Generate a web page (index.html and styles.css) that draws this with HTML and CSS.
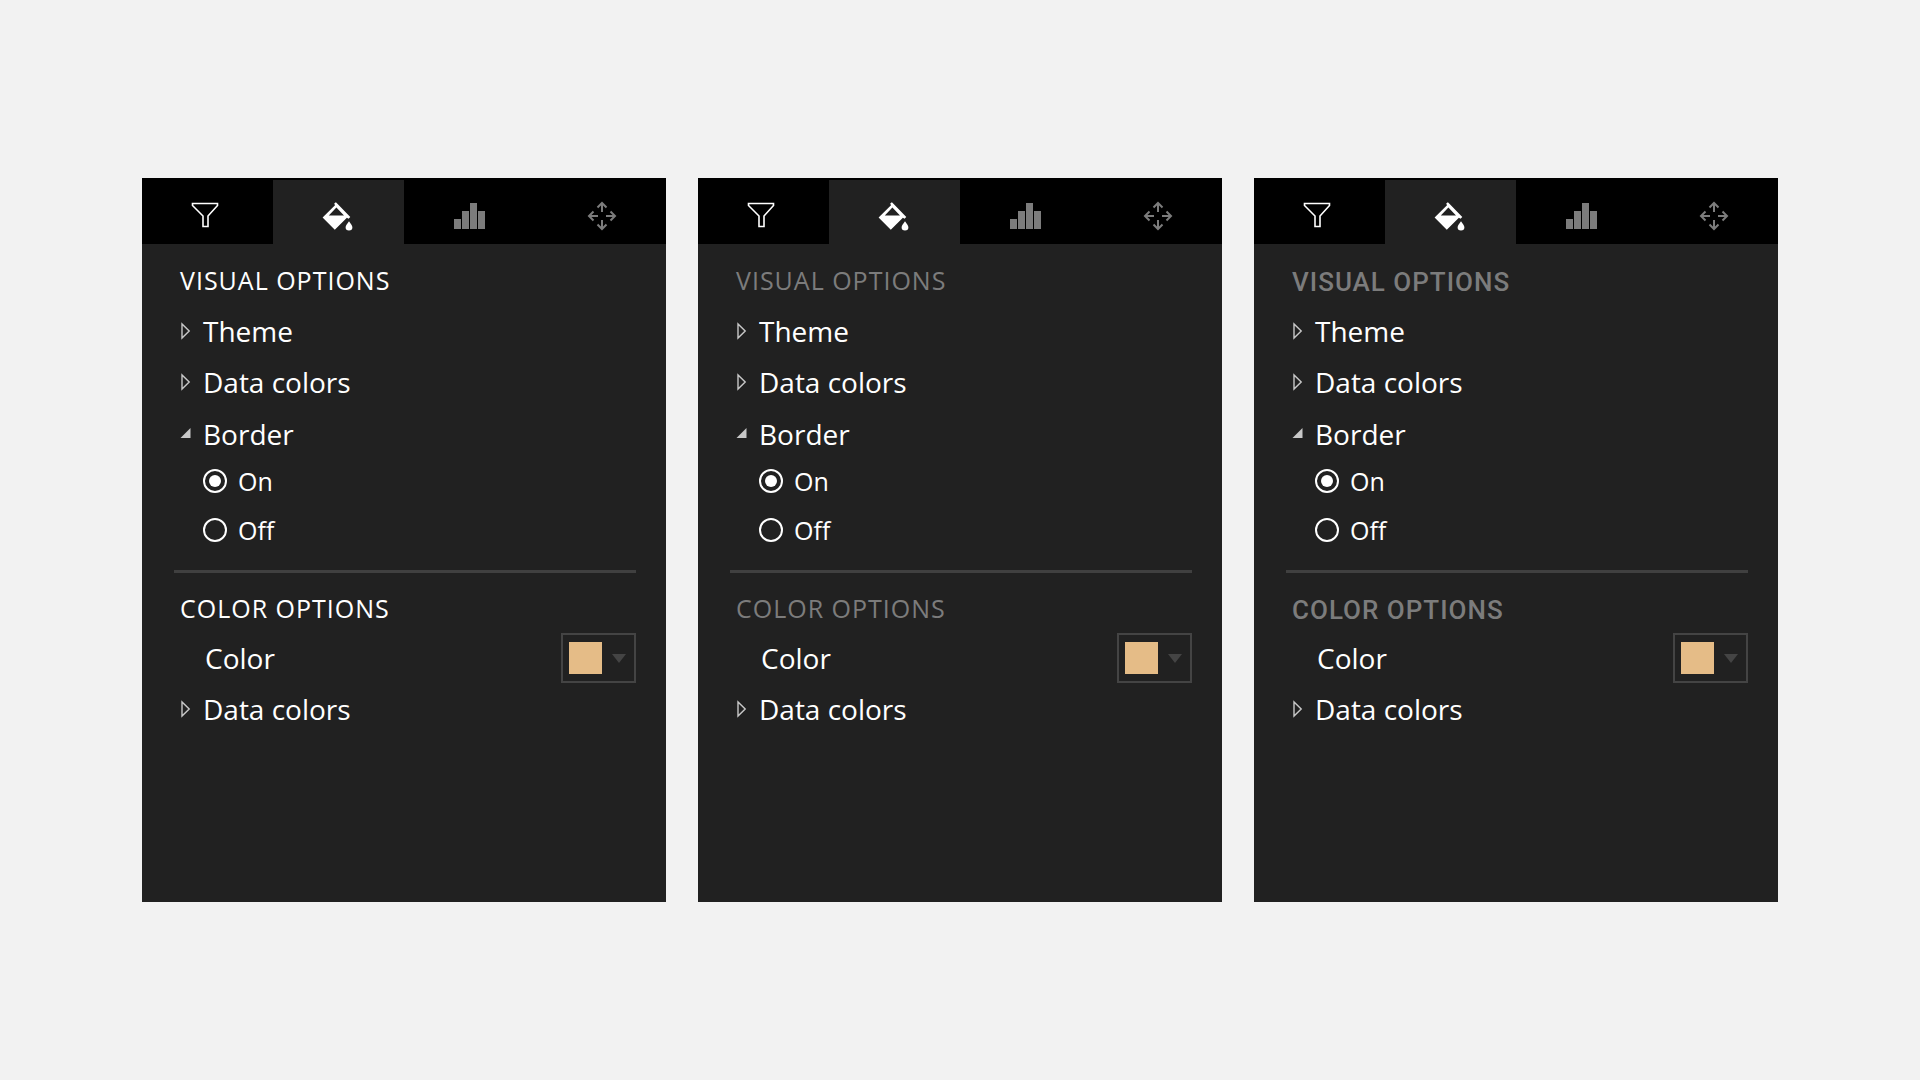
FILE: index.html
```html
<!DOCTYPE html>
<html lang="en">
<head>
  <meta charset="UTF-8">
  <meta name="viewport" content="width=device-width, initial-scale=1.0">
  <title>Format pane</title>
  <link rel="stylesheet" href="styles.css">
</head>

<body>
  <!-- Shared icons -->
  <svg class="icon-defs" aria-hidden="true">
    <symbol id="icon-filter" viewBox="2 1 33 32">
      <path d="M3.5 4.5h25v2L19 17v10.5h-5V17L3.5 6.5z" fill="none" stroke="currentColor" stroke-width="1.6"/>
    </symbol>
    <symbol id="icon-paint" viewBox="1 0 33 32">
      <path fill="currentColor" fill-rule="evenodd" d="M13.2 3.6l1.7-1.3 2 2 12.4 12.6-1.8 1.8-1.6-1L13.8 29.8 1.6 17.6 14 5.2zM15.4 7.6l-7.6 8h15.2z"/>
      <path fill="currentColor" d="M28 21.2c1.6 2.6 3.4 4.2 3.4 6a3.4 3.2 0 0 1-6.8 0c0-1.8 1.8-3.4 3.4-6z"/>
    </symbol>
    <symbol id="icon-chart" viewBox="-1 0 33 32">
      <path fill="currentColor" d="M0 19h7v10H0zM8 11h7v18H8zM16 3h7v26h-7zM24 11h7v18h-7z"/>
    </symbol>
    <symbol id="icon-move" viewBox="-2 0 33 32">
      <path d="M16 3v9M11.5 7.5L16 3l4.500 4.500M16 29v-9M11.5 24.500L16 29l4.500-4.500M3 16h9M7.500 11.500L3 16l4.500 4.500M29 16h-9M24.500 11.500L29 16l-4.500 4.500" fill="none" stroke="currentColor" stroke-width="2"/>
    </symbol>
    <symbol id="icon-closed" viewBox="0 0 10 18">
      <path d="M1.5 2v14L8.700 9z" fill="none" stroke="currentColor" stroke-width="1.4"/>
    </symbol>
    <symbol id="icon-open" viewBox="0 0 10 18">
      <path d="M10 3v10H0z" fill="currentColor"/>
    </symbol>
  </svg>

  <main class="panels">
    <section class="panel">
      <nav class="tabs">
        <button class="tab" aria-label="Filter"><svg><use href="#icon-filter"/></svg></button>
        <button class="tab active" aria-label="Format"><svg><use href="#icon-paint"/></svg></button>
        <button class="tab muted" aria-label="Chart"><svg><use href="#icon-chart"/></svg></button>
        <button class="tab muted" aria-label="Move"><svg><use href="#icon-move"/></svg></button>
      </nav>
      <div class="options">
        <h2>VISUAL OPTIONS</h2>
        <details>
          <summary><svg class="closed"><use href="#icon-closed"/></svg><svg class="opened"><use href="#icon-open"/></svg>Theme</summary>
        </details>
        <details>
          <summary><svg class="closed"><use href="#icon-closed"/></svg><svg class="opened"><use href="#icon-open"/></svg>Data colors</summary>
        </details>
        <details open>
          <summary><svg class="closed"><use href="#icon-closed"/></svg><svg class="opened"><use href="#icon-open"/></svg>Border</summary>
          <div class="radios">
            <label><input type="radio" name="border1" checked>On</label>
            <label><input type="radio" name="border1">Off</label>
          </div>
        </details>
        <hr>
        <h2>COLOR OPTIONS</h2>
        <div class="color-row">
          <label for="color1">Color</label>
          <button class="picker" id="color1"><span class="swatch"></span><span class="caret"></span></button>
        </div>
        <details>
          <summary><svg class="closed"><use href="#icon-closed"/></svg><svg class="opened"><use href="#icon-open"/></svg>Data colors</summary>
        </details>
      </div>
    </section>

    <section class="panel gray-titles">
      <nav class="tabs">
        <button class="tab" aria-label="Filter"><svg><use href="#icon-filter"/></svg></button>
        <button class="tab active" aria-label="Format"><svg><use href="#icon-paint"/></svg></button>
        <button class="tab muted" aria-label="Chart"><svg><use href="#icon-chart"/></svg></button>
        <button class="tab muted" aria-label="Move"><svg><use href="#icon-move"/></svg></button>
      </nav>
      <div class="options">
        <h2>VISUAL OPTIONS</h2>
        <details>
          <summary><svg class="closed"><use href="#icon-closed"/></svg><svg class="opened"><use href="#icon-open"/></svg>Theme</summary>
        </details>
        <details>
          <summary><svg class="closed"><use href="#icon-closed"/></svg><svg class="opened"><use href="#icon-open"/></svg>Data colors</summary>
        </details>
        <details open>
          <summary><svg class="closed"><use href="#icon-closed"/></svg><svg class="opened"><use href="#icon-open"/></svg>Border</summary>
          <div class="radios">
            <label><input type="radio" name="border2" checked>On</label>
            <label><input type="radio" name="border2">Off</label>
          </div>
        </details>
        <hr>
        <h2>COLOR OPTIONS</h2>
        <div class="color-row">
          <label for="color2">Color</label>
          <button class="picker" id="color2"><span class="swatch"></span><span class="caret"></span></button>
        </div>
        <details>
          <summary><svg class="closed"><use href="#icon-closed"/></svg><svg class="opened"><use href="#icon-open"/></svg>Data colors</summary>
        </details>
      </div>
    </section>

    <section class="panel gray-titles din-titles">
      <nav class="tabs">
        <button class="tab" aria-label="Filter"><svg><use href="#icon-filter"/></svg></button>
        <button class="tab active" aria-label="Format"><svg><use href="#icon-paint"/></svg></button>
        <button class="tab muted" aria-label="Chart"><svg><use href="#icon-chart"/></svg></button>
        <button class="tab muted" aria-label="Move"><svg><use href="#icon-move"/></svg></button>
      </nav>
      <div class="options">
        <h2>VISUAL OPTIONS</h2>
        <details>
          <summary><svg class="closed"><use href="#icon-closed"/></svg><svg class="opened"><use href="#icon-open"/></svg>Theme</summary>
        </details>
        <details>
          <summary><svg class="closed"><use href="#icon-closed"/></svg><svg class="opened"><use href="#icon-open"/></svg>Data colors</summary>
        </details>
        <details open>
          <summary><svg class="closed"><use href="#icon-closed"/></svg><svg class="opened"><use href="#icon-open"/></svg>Border</summary>
          <div class="radios">
            <label><input type="radio" name="border3" checked>On</label>
            <label><input type="radio" name="border3">Off</label>
          </div>
        </details>
        <hr>
        <h2>COLOR OPTIONS</h2>
        <div class="color-row">
          <label for="color3">Color</label>
          <button class="picker" id="color3"><span class="swatch"></span><span class="caret"></span></button>
        </div>
        <details>
          <summary><svg class="closed"><use href="#icon-closed"/></svg><svg class="opened"><use href="#icon-open"/></svg>Data colors</summary>
        </details>
      </div>
    </section>
  </main>
</body>
</html>
```
FILE: styles.css
```css
:root {
  --page: #f2f2f2;
  --panel: #212121;
  --line: #444;
  --muted: #7c7c7c;
  --swatch: #e5bc87;
}

* {
  box-sizing: border-box;
}

body {
  margin: 0;
  min-height: 100vh;
  display: flex;
  align-items: center;
  background: var(--page);
  color: #fff;
  font-family: "Segoe UI", "Open Sans", "Noto Sans", sans-serif;
  font-size: 28px;
}

button {
  margin: 0;
  padding: 0;
  border: 0;
  border-radius: 0;
  color: inherit;
  font: inherit;
  cursor: pointer;
}

.icon-defs {
  display: none;
}

.panels {
  flex: 1;
  display: grid;
  grid-template-columns: repeat(3, 1fr);
  gap: 32px;
  padding: 0 142px;
}

.panel {
  background: var(--panel);
  padding-bottom: 168px;
}

/* Tabs */
.tabs {
  display: flex;
  height: 66px;
  padding-top: 2px;
  background: #000;
}

.tab {
  flex: 1;
  display: flex;
  align-items: center;
  justify-content: center;
  padding-top: 8px;
  background: #000;
}

.tab svg {
  width: 33px;
  height: 32px;
}

.tab.active {
  background: var(--panel);
}

.tab.muted {
  color: var(--muted);
}

/* Options */
.options {
  padding: 12px 30px 0 32px;
}

h2 {
  margin: 0;
  padding-left: 6px;
  font-size: 25px;
  font-weight: 400;
  line-height: 49px;
  letter-spacing: 1px;
}

.gray-titles h2 {
  color: var(--muted);
}

.din-titles h2 {
  padding-top: 3px;
  font-family: "DIN", Roboto, sans-serif;
  font-size: 26px;
  font-weight: 500;
  line-height: 46px;
}

summary {
  display: flex;
  align-items: center;
  gap: 12px;
  height: 51px;
  padding-left: 6px;
  list-style: none;
  cursor: pointer;
}

details[open] summary {
  height: 53px;
}

summary svg {
  width: 11px;
  height: 18px;
  color: #c8c8c8;
}

summary .opened,
details[open] .closed {
  display: none;
}

details[open] .opened {
  display: block;
}

.radios {
  display: flex;
  flex-direction: column;
  gap: 7px;
  padding-left: 29px;
  font-size: 25px;
}

.radios label {
  display: flex;
  align-items: center;
  gap: 11px;
  height: 42px;
}

.radios input {
  appearance: none;
  width: 24px;
  height: 24px;
  margin: 0;
  border: 2px solid #fff;
  border-radius: 50%;
}

.radios input:checked {
  padding: 4px;
  background: #fff content-box;
}

hr {
  height: 3px;
  margin: 19px 0 11px;
  border: 0;
  background: #404040;
}

.color-row {
  display: flex;
  align-items: center;
  justify-content: space-between;
  height: 50px;
  padding-left: 31px;
}

.picker {
  display: flex;
  align-items: center;
  gap: 10px;
  width: 75px;
  height: 50px;
  padding-left: 6px;
  border: 2px solid var(--line);
  background: none;
}

.swatch {
  width: 33px;
  height: 32px;
  background: var(--swatch);
}

.caret {
  border: 7px solid transparent;
  border-top: 9px solid var(--line);
  border-bottom: 0;
}
```
